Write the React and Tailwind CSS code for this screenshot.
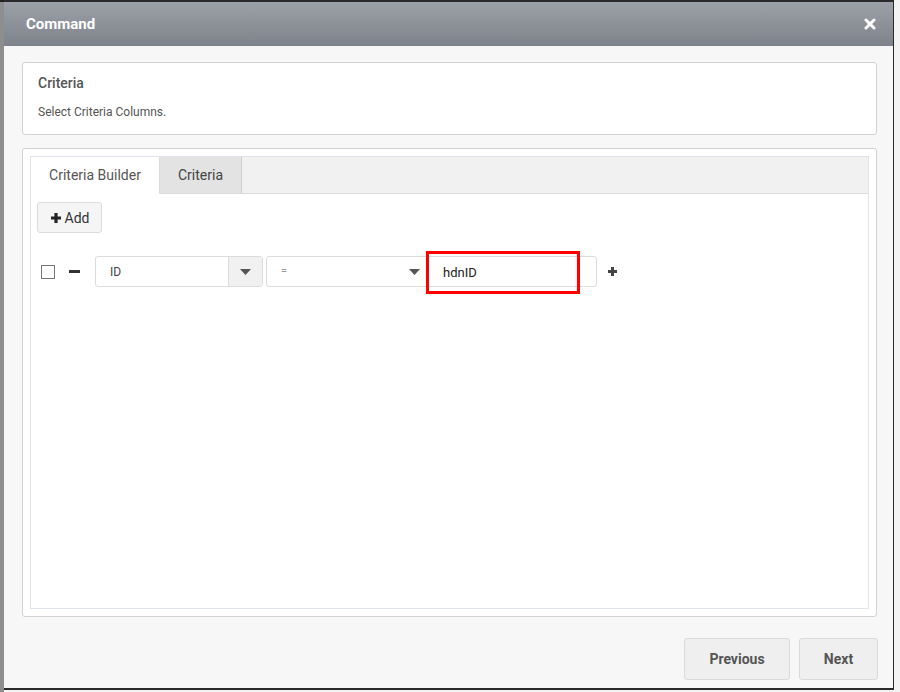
import React from "react";

function Caret() {
  return (
    <svg width="11" height="6" viewBox="0 0 11 6"><path d="M0 0h11L5.5 6z" fill="#555" /></svg>
  );
}

export default function App() {
  return (
    <div className="w-[900px] h-[692px] flex bg-[#f3f3f3] overflow-hidden" style={{ fontFamily: "Roboto, 'Open Sans', sans-serif" }}>
      <div className="w-[4px] h-full bg-[#8e8e8e] border-t-2 border-[#222]" />
      <div className="w-[890px] h-[690px] flex flex-col border-t-2 border-b-2 border-r border-[#2a2a2a] bg-[#f7f7f7] shrink-0">
        {/* header */}
        <div className="h-[44px] shrink-0 flex items-center justify-between pl-[22px] pr-[17px] bg-gradient-to-b from-[#9ca0a7] to-[#7e838b]">
          <span className="text-white font-bold text-[15px]">Command</span>
          <svg width="12" height="12" viewBox="0 0 12 12">
            <path d="M2 2L10 10M10 2L2 10" stroke="white" strokeWidth="3" strokeLinecap="round" />
          </svg>
        </div>
        {/* body */}
        <div className="flex-1 flex flex-col pl-[18px] pr-[16px] pt-[16px]">
          <div className="h-[73px] bg-white border border-[#d2d2d2] rounded-[3px] px-[15px] pt-[10px]">
            <div className="text-[14px] font-medium text-[#555]">Criteria</div>
            <div className="text-[12px] text-[#555] mt-[9px]">Select Criteria Columns.</div>
          </div>
          <div className="mt-[13px] h-[469px] bg-white border border-[#d2d2d2] rounded-[3px] p-[7px]">
            <div className="h-full flex flex-col border border-[#dfe4ea]">
              <div className="h-[37px] shrink-0 flex bg-[#f1f1f1] border-b border-[#dcdcdc]">
                <div className="w-[129px] h-[37px] bg-white flex items-center justify-center text-[14px] text-[#555] border-r border-[#dcdcdc] -mb-px">Criteria Builder</div>
                <div className="w-[82px] bg-[#e3e3e3] flex items-center justify-center text-[14px] text-[#444] border-r border-[#cfcfcf]">Criteria</div>
              </div>
              <div className="flex-1 bg-white px-[6px] pt-[8px]">
                <button className="h-[31px] w-[65px] flex items-center justify-center gap-[3px] bg-[#f5f5f5] border border-[#dcdcdc] rounded-[3px] text-[14px] text-[#333] pt-px">
                  <svg width="12" height="12" viewBox="0 0 12 12"><path d="M6 1v10M1 6h10" stroke="#222" strokeWidth="3.2" /></svg>
                  Add
                </button>
                <div className="mt-[23px] flex items-center h-[31px]">
                  <div className="ml-[4px] w-[14px] h-[14px] border border-[#777] bg-white" />
                  <div className="ml-[14px] w-[11px] h-[3px] bg-[#333]" />
                  <div className="ml-[15px] w-[168px] h-[31px] flex border border-[#dcdcdc] rounded-[3px] bg-white">
                    <div className="flex-1 flex items-center pl-[14px] text-[12px] text-[#444]">ID</div>
                    <div className="w-[34px] flex items-center justify-center bg-[#f1f1f1] border-l border-[#dcdcdc]"><Caret /></div>
                  </div>
                  <div className="ml-[3px] w-[166px] h-[31px] flex border border-[#dcdcdc] rounded-[3px] bg-white">
                    <div className="flex-1 flex items-center pl-[14px] text-[11px] text-[#999]">=</div>
                    <div className="w-[34px] flex items-center justify-center"><Caret /></div>
                  </div>
                  <div className="relative w-[170px] h-[31px] border border-[#dcdcdc] rounded-[3px] bg-white -ml-[5px]">
                    <div className="absolute left-[-2px] top-[-6px] w-[154px] h-[43px] border-[3px] border-[#f00] flex items-center pl-[14px] text-[13px] text-[#222]">hdnID</div>
                  </div>
                  <svg className="ml-[10px]" width="11" height="11" viewBox="0 0 11 11"><path d="M5.5 1v9M1 5.5h9" stroke="#444" strokeWidth="3" /></svg>
                </div>
              </div>
            </div>
          </div>
          <div className="flex justify-end gap-[9px] mt-[21px] -mr-[1px]">
            <button className="w-[106px] h-[42px] bg-[#efefef] border border-[#dadada] rounded-[3px] text-[14px] font-bold text-[#555]">Previous</button>
            <button className="w-[79px] h-[42px] bg-[#efefef] border border-[#dadada] rounded-[3px] text-[14px] font-bold text-[#555]">Next</button>
          </div>
        </div>
      </div>
    </div>
  );
}
